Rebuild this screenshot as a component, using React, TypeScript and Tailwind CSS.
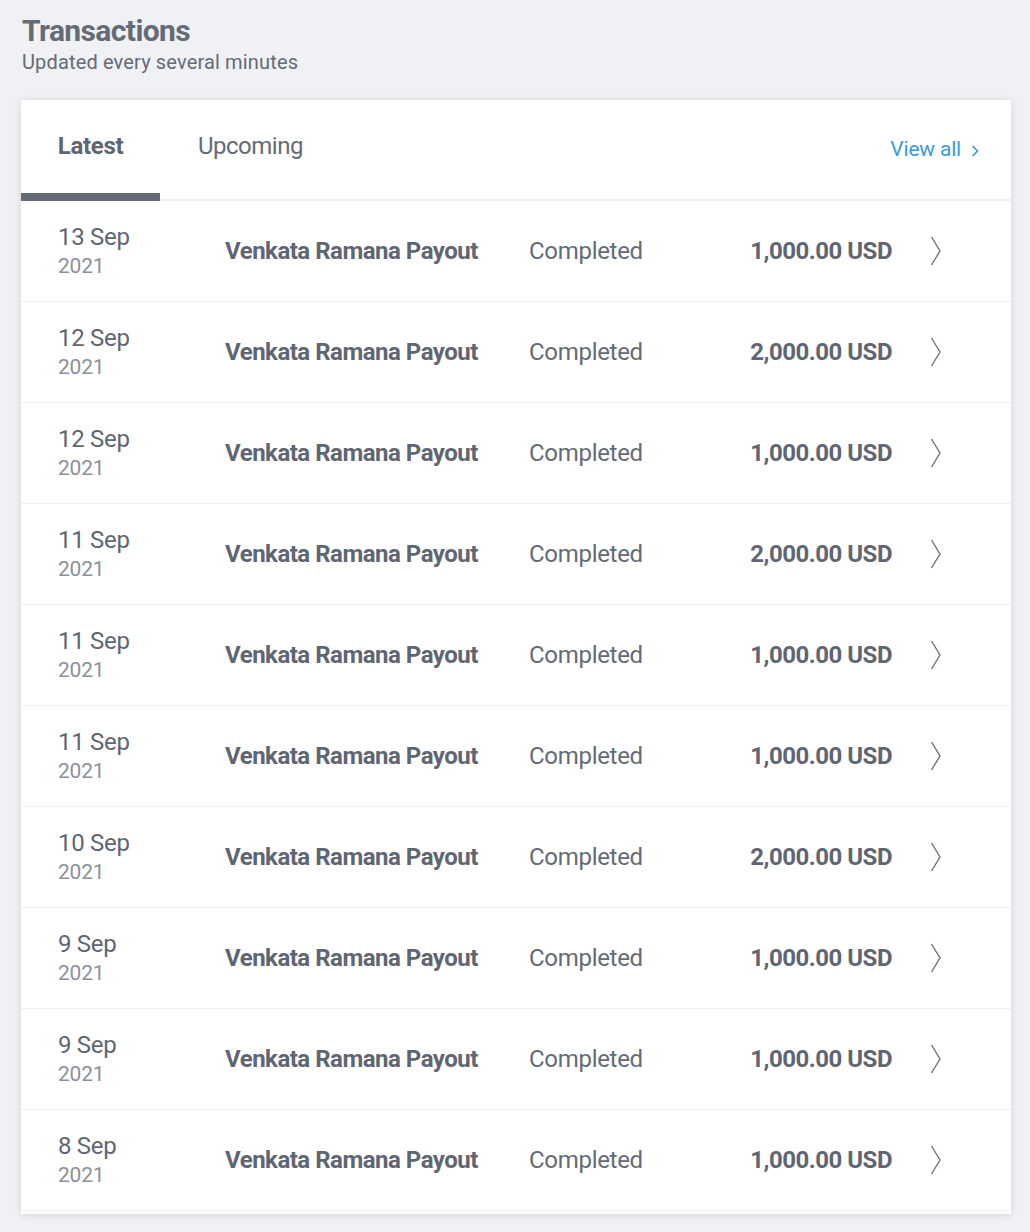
import React from "react";

const rows = [
  { d: "13 Sep", a: "1,000.00 USD" },
  { d: "12 Sep", a: "2,000.00 USD" },
  { d: "12 Sep", a: "1,000.00 USD" },
  { d: "11 Sep", a: "2,000.00 USD" },
  { d: "11 Sep", a: "1,000.00 USD" },
  { d: "11 Sep", a: "1,000.00 USD" },
  { d: "10 Sep", a: "2,000.00 USD" },
  { d: "9 Sep", a: "1,000.00 USD" },
  { d: "9 Sep", a: "1,000.00 USD" },
  { d: "8 Sep", a: "1,000.00 USD" },
];

function Chevron() {
  return (
    <svg width="12" height="32" viewBox="0 0 12 32" fill="none">
      <path d="M1.5 2 L10 16 L1.5 30" stroke="#6b7280" strokeWidth="1.4" />
    </svg>
  );
}

export default function App() {
  return (
    <div className="min-h-[1232px] bg-[#f0f1f5] pt-[12px] pl-[21px] pr-[19px] pb-[17px] font-['Roboto',sans-serif] text-[#606774]">
      <h1 className="ml-[1px] text-[30px] font-bold leading-[38px] tracking-[-0.6px] text-[#646b77]">Transactions</h1>
      <p className="ml-[1px] text-[20px] leading-[24px] text-[#646b77] tracking-[0.15px]">Updated every several minutes</p>
      <div className="mt-[26px] bg-white shadow-[0_1px_8px_rgba(0,0,0,0.12)] pb-[3px]">
        <div className="flex items-stretch h-[101px] border-b-2 border-[#eef0f4]">
          <div className="relative w-[139px] flex items-center justify-center">
            <span className="text-[24px] font-bold text-[#5f6673] tracking-[-0.3px] -mt-[8px]">Latest</span>
            <div className="absolute left-0 right-0 -bottom-[2px] h-[8px] bg-[#646b78]"></div>
          </div>
          <div className="pl-[38px] flex items-center">
            <span className="text-[24px] text-[#646b78] tracking-[-0.5px] -mt-[8px]">Upcoming</span>
          </div>
          <div className="flex-1"></div>
          <div className="flex items-center pr-[32px]">
            <span className="text-[21px] text-[#3b99de] tracking-[-0.2px]">View all</span>
            <svg className="ml-[10px] mt-[2px]" width="8" height="14" viewBox="0 0 8 14" fill="none">
              <path d="M1.5 2 L6.5 7 L1.5 12" stroke="#3b99de" strokeWidth="1.6" />
            </svg>
          </div>
        </div>
        {rows.map((r, i) => (
          <div key={i} className="flex items-center h-[101px] border-b border-[#eef0f3] pl-[37px]">
            <div className="w-[167px] flex flex-col mt-[3px]">
              <span className="text-[24px] leading-[27px] text-[#5f6673] tracking-[-0.3px]">{r.d}</span>
              <span className="text-[21px] leading-[30px] text-[#8a919c] tracking-[-0.2px]">2021</span>
            </div>
            <div className="w-[304px] text-[24px] font-bold text-[#5f6673] tracking-[-0.5px]">Venkata Ramana Payout</div>
            <div className="w-[150px] text-[24px] text-[#646b78] tracking-[-0.3px]">Completed</div>
            <div className="w-[213px] text-right text-[24px] font-bold text-[#5f6673] tracking-[-0.5px]">{r.a}</div>
            <div className="ml-[38px] flex items-center"><Chevron /></div>
          </div>
        ))}
      </div>
    </div>
  );
}
